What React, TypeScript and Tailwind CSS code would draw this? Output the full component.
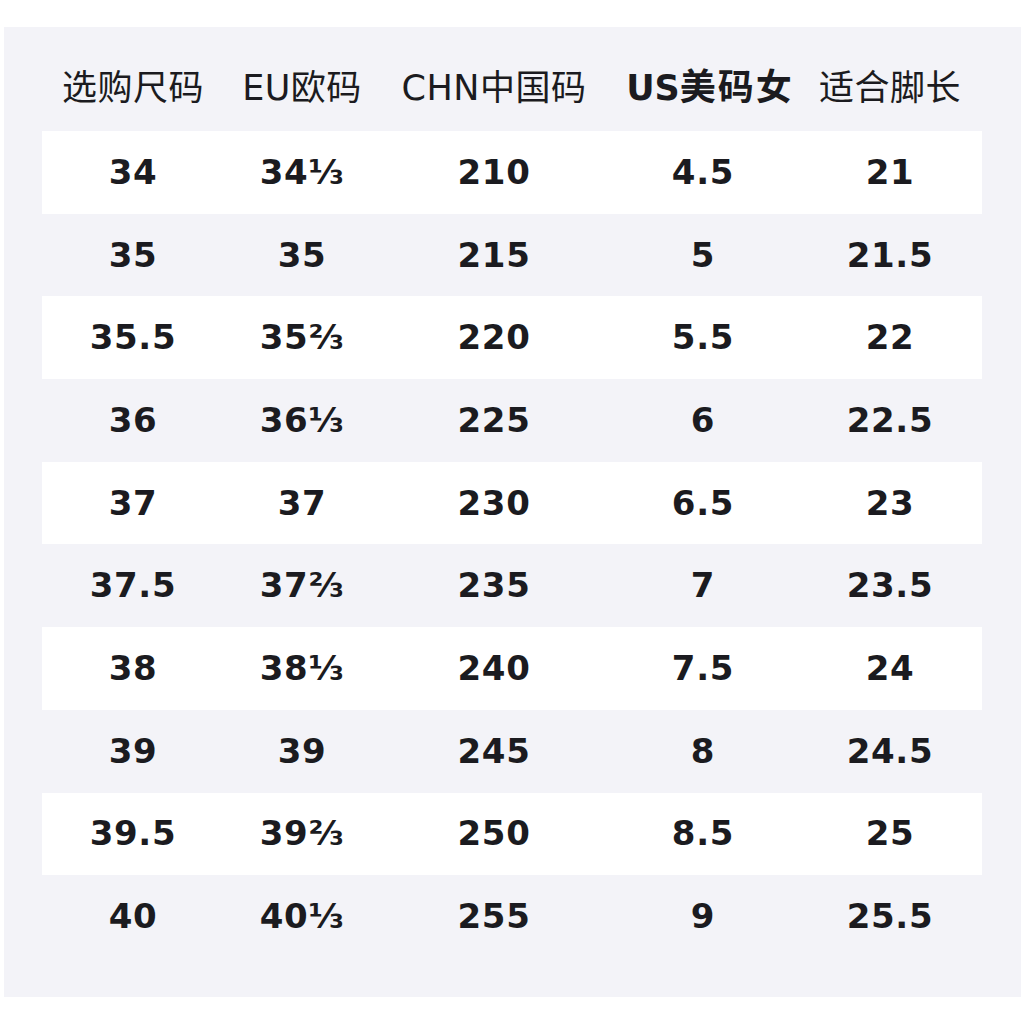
const headers: { label: string; bold?: boolean }[] = [
	{ label: "选购尺码" },
	{ label: "EU欧码" },
	{ label: "CHN中国码" },
	{ label: "US美码女", bold: true },
	{ label: "适合脚长" },
];

const rows: string[][] = [
	["34", "34⅓", "210", "4.5", "21"],
	["35", "35", "215", "5", "21.5"],
	["35.5", "35⅔", "220", "5.5", "22"],
	["36", "36⅓", "225", "6", "22.5"],
	["37", "37", "230", "6.5", "23"],
	["37.5", "37⅔", "235", "7", "23.5"],
	["38", "38⅓", "240", "7.5", "24"],
	["39", "39", "245", "8", "24.5"],
	["39.5", "39⅔", "250", "8.5", "25"],
	["40", "40⅓", "255", "9", "25.5"],
];

const cols = "grid grid-cols-[182px_156px_228px_190px_184px]";

export default function App() {
	return (
		<div className="h-[1024px] w-[1024px] bg-white pt-[27px] pl-[4px] font-['DejaVu_Sans','Noto_Sans_CJK_SC',sans-serif] text-[#1b1b20]">
			<div className="h-[970px] w-[1017px] bg-[#f3f3f8] pr-[39px] pl-[38px]">
				<div className={`${cols} h-[104px] items-center pt-[18px]`}>
					{headers.map((h) =>
						h.bold ? (
							<div key={h.label} className="pl-[14px] text-center text-[35px] font-bold">
								<span>US</span>
								<span className="text-[36px] tracking-[2px]">美码女</span>
							</div>
						) : (
							<div key={h.label} className="text-center text-[35px] font-normal tracking-[0.5px]">
								{h.label}
							</div>
						),
					)}
				</div>
				{rows.map((r, i) => (
					<div key={r[0]} className={`${cols} h-[82.7px] items-center ${i % 2 === 0 ? "bg-white" : ""}`}>
						{r.map((v, j) => (
							<div key={j} className="text-center text-[34px] font-bold tracking-[0.7px]">
								{v}
							</div>
						))}
					</div>
				))}
			</div>
		</div>
	);
}
